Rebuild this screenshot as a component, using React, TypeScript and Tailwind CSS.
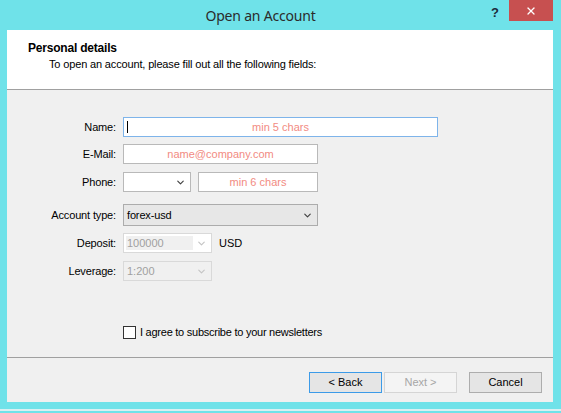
import { ChevronDown, X } from 'lucide-react'

const label = 'w-[116px] pr-[7px] text-right text-[11px] tracking-[-0.15px] text-[#000] shrink-0'

function Chevron({ disabled }: { disabled?: boolean }) {
  return (
    <ChevronDown
      className={disabled ? 'w-[11px] h-[11px] text-[#c4c4c4]' : 'w-[11px] h-[11px] text-[#404040]'}
      strokeWidth={2.5}
    />
  )
}

export default function App() {
  return (
    <div
      className="w-[561px] h-[413px] bg-[#6fe2e9] flex flex-col overflow-hidden"
      style={{ fontFamily: '"Liberation Sans", Arial, sans-serif' }}
    >
      {/* title bar */}
      <div className="relative h-[30px] shrink-0 flex items-center justify-center pr-[40px]">
        <span className="text-[14px] tracking-[-0.2px] text-[#2b2b2b] pt-[1px]" style={{ fontFamily: '"Noto Sans", "Open Sans", sans-serif' }}>
          Open an Account
        </span>
        <span className="absolute left-[491px] top-[3px] text-[13px] font-bold text-[#1c2a3a]">?</span>
        <button className="absolute left-[509px] top-0 w-[44px] h-[21px] bg-[#c75050] flex items-center justify-center">
          <X className="w-[12px] h-[12px] text-white" strokeWidth={2.5} />
        </button>
      </div>

      {/* client */}
      <div className="ml-[7px] w-[546px] h-[372px] bg-[#f0f0f0] flex flex-col shrink-0">
        <div className="h-[60px] bg-white border-b border-[#a0a0a0] pl-[21px] pt-[11px] shrink-0">
          <div className="text-[12px] font-bold text-black leading-[14px] tracking-[-0.2px]">Personal details</div>
          <div className="text-[11px] tracking-[-0.15px] text-black leading-[14px] mt-[2px] pl-[21px]">
            To open an account, please fill out all the following fields:
          </div>
        </div>

        <div className="flex flex-col pt-[27px]">
          <div className="flex items-center h-[20px]">
            <span className={label}>Name:</span>
            <div className="relative w-[315px] h-[20px] bg-white border border-[#7eb4ea] flex items-center justify-center">
              <span className="absolute left-[3px] top-[3px] w-[1px] h-[12px] bg-black" />
              <span className="text-[11px] text-[#f28b82]">min 5 chars</span>
            </div>
          </div>

          <div className="flex items-center h-[20px] mt-[7px]">
            <span className={label}>E-Mail:</span>
            <div className="w-[195px] h-[20px] bg-white border border-[#b9b9b9] flex items-center justify-center">
              <span className="text-[11px] text-[#f28b82]">name@company.com</span>
            </div>
          </div>

          <div className="flex items-center h-[20px] mt-[8px]">
            <span className={label}>Phone:</span>
            <div className="w-[68px] h-[20px] bg-white border border-[#b9b9b9] flex items-center justify-end pr-[4px]">
              <Chevron />
            </div>
            <div className="ml-[7px] w-[120px] h-[20px] bg-white border border-[#b9b9b9] flex items-center justify-center">
              <span className="text-[11px] text-[#f28b82]">min 6 chars</span>
            </div>
          </div>

          <div className="flex items-center h-[22px] mt-[12px]">
            <span className={label}>Account type:</span>
            <div className="w-[195px] h-[22px] bg-[#e7e7e7] border border-[#acacac] flex items-center justify-between pl-[3px] pr-[4px]">
              <span className="text-[11px] tracking-[-0.15px] text-black">forex-usd</span>
              <Chevron />
            </div>
          </div>

          <div className="flex items-center h-[20px] mt-[7px]">
            <span className={label}>Deposit:</span>
            <div className="w-[89px] h-[20px] bg-white border border-[#d9d9d9] flex items-center p-[2px]">
              <div className="w-[67px] h-full bg-[#f0f0f0] flex items-center pl-[1px]">
                <span className="text-[11px] text-[#a0a0a0]">100000</span>
              </div>
              <div className="flex-1 flex justify-center">
                <Chevron disabled />
              </div>
            </div>
            <span className="ml-[7px] text-[11px] text-black">USD</span>
          </div>

          <div className="flex items-center h-[20px] mt-[8px]">
            <span className={label}>Leverage:</span>
            <div className="w-[89px] h-[20px] bg-[#f0f0f0] border border-[#d9d9d9] flex items-center justify-between pl-[3px] pr-[4px]">
              <span className="text-[11px] text-[#a0a0a0]">1:200</span>
              <Chevron disabled />
            </div>
          </div>

          <div className="flex items-center h-[13px] mt-[45px] pl-[116px]">
            <span className="w-[13px] h-[13px] bg-white border border-[#333]" />
            <span className="ml-[4px] text-[11px] tracking-[-0.25px] text-black">I agree to subscribe to your newsletters</span>
          </div>
        </div>

        <div className="mt-[18px] border-t border-[#a0a0a0] w-full" />

        <div className="flex pt-[14px] pl-[302px]">
          <button className="w-[73px] h-[21px] border border-[#3c9be8] bg-[#e5e5e5] text-[11px] text-black">
            &lt; Back
          </button>
          <button className="ml-[2px] w-[73px] h-[21px] border border-[#d5d5d5] bg-[#f4f4f4] text-[11px] text-[#a6a6a6]">
            Next &gt;
          </button>
          <button className="ml-[12px] w-[73px] h-[21px] border border-[#adadad] bg-[#e5e5e5] text-[11px] text-black">
            Cancel
          </button>
        </div>
      </div>

      <div className="mt-[7px] h-[2px] bg-[#d8f0f2]" />
    </div>
  )
}
